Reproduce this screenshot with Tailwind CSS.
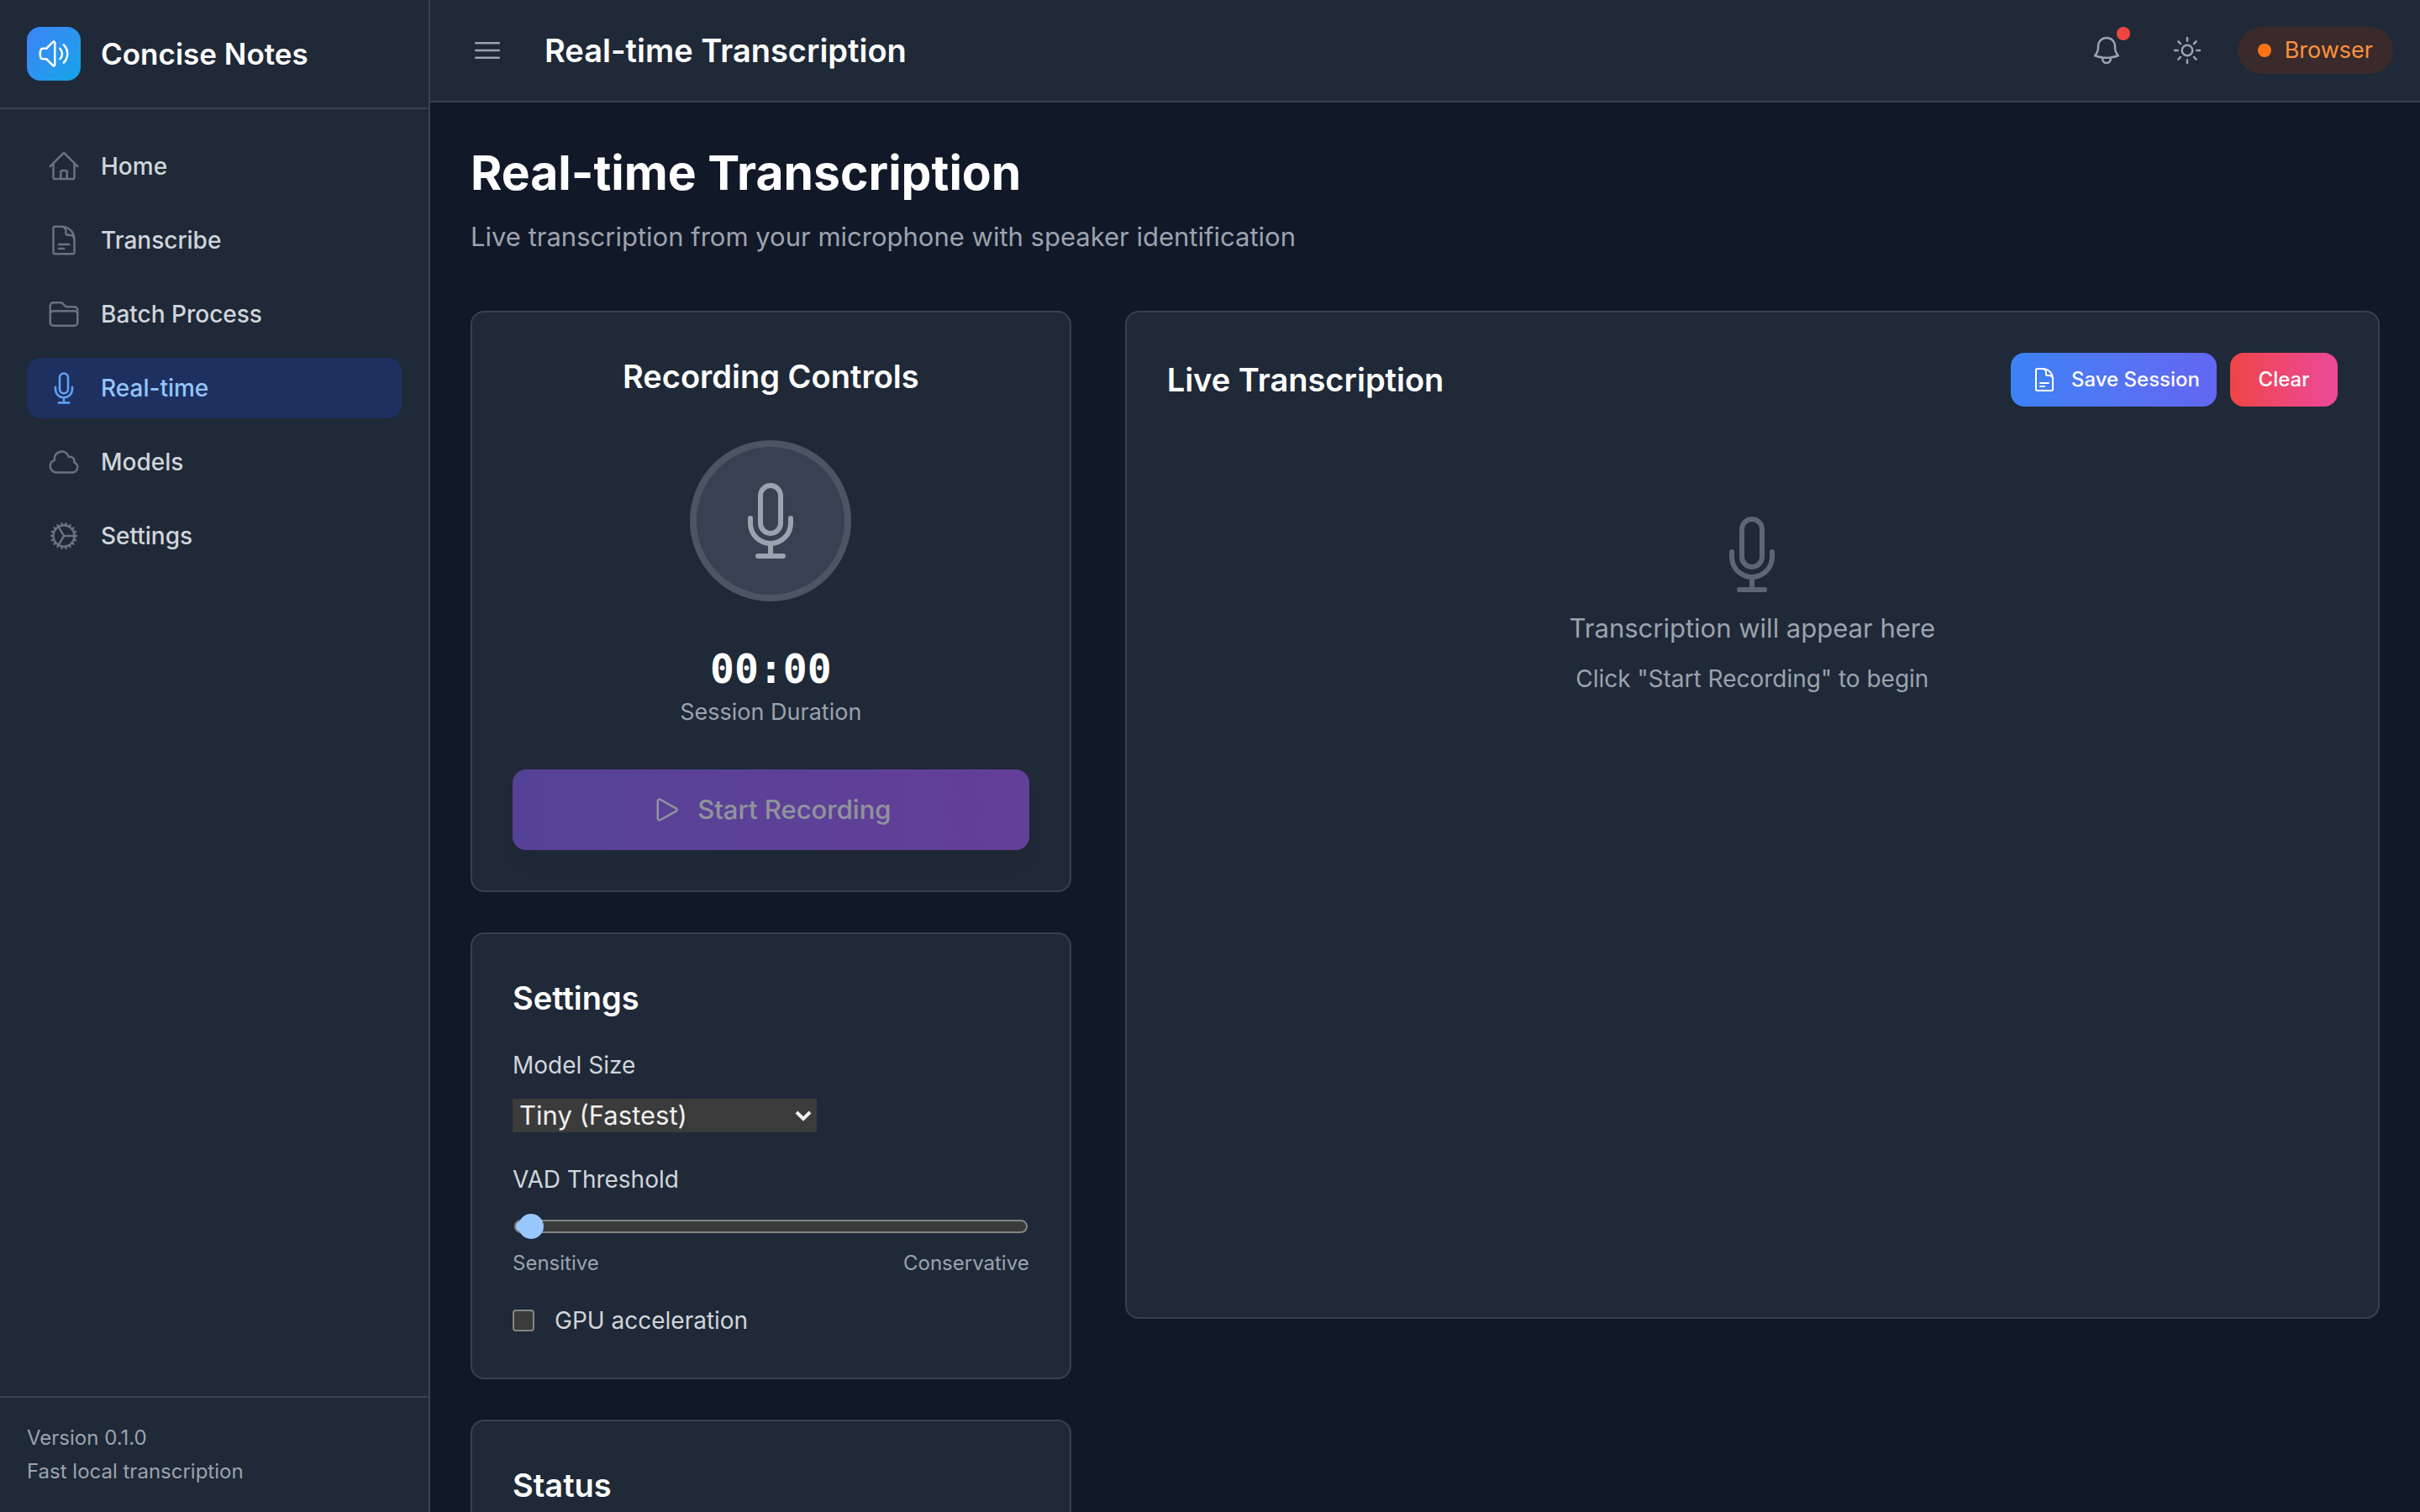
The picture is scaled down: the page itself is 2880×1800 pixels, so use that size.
<!DOCTYPE html>
<html lang="en">
<head>
<meta charset="utf-8">
<meta name="viewport" content="width=device-width, initial-scale=1">
<title>Concise Notes – Real-time Transcription</title>
<script src="https://cdn.jsdelivr.net/npm/@tailwindcss/browser@4"></script>
</head>
<body class="flex h-screen overflow-hidden bg-[#111827] font-[Inter,sans-serif] text-[28px] leading-10 text-[#d1d5db] antialiased">

<!-- Shared icon symbols -->
<svg class="hidden" aria-hidden="true">
  <symbol id="mic" viewBox="0 0 24 24"><path d="M12 18.75a6 6 0 0 0 6-6v-1.5m-6 7.5a6 6 0 0 1-6-6v-1.5m6 7.5v3.75m-3.75 0h7.5M12 15.75a3 3 0 0 1-3-3V4.5a3 3 0 1 1 6 0v8.25a3 3 0 0 1-3 3Z"/></symbol>
  <symbol id="doc" viewBox="0 0 24 24"><path d="M19.5 14.25v-2.625a3.375 3.375 0 0 0-3.375-3.375h-1.5A1.125 1.125 0 0 1 13.5 7.125v-1.5a3.375 3.375 0 0 0-3.375-3.375H8.25m0 12.75h7.5m-7.5 3H12M10.5 2.25H5.625c-.621 0-1.125.504-1.125 1.125v17.25c0 .621.504 1.125 1.125 1.125h12.75c.621 0 1.125-.504 1.125-1.125V11.25a9 9 0 0 0-9-9Z"/></symbol>
</svg>

<aside class="flex w-[512px] shrink-0 flex-col border-r-2 border-[#374151] bg-[#1f2937]">
  <div class="flex items-center gap-6 border-b-2 border-[#374151] p-8">
    <div class="flex size-16 items-center justify-center rounded-2xl bg-linear-135 from-[#3b82f6] to-[#0ea5e9] text-white">
      <svg class="size-10 fill-none stroke-current stroke-[1.5] [stroke-linecap:round] [stroke-linejoin:round]" viewBox="0 0 24 24"><path d="M19.114 5.636a9 9 0 0 1 0 12.728M16.463 8.288a5.25 5.25 0 0 1 0 7.424M6.75 8.25l4.72-4.72a.75.75 0 0 1 1.28.53v15.88a.75.75 0 0 1-1.28.53l-4.72-4.72H4.51c-.88 0-1.704-.507-1.938-1.354A9.009 9.009 0 0 1 2.25 12c0-.83.112-1.633.322-2.396C2.806 8.756 3.63 8.25 4.51 8.25H6.75Z"/></svg>
    </div>
    <span class="text-[35px] font-semibold text-white">Concise Notes</span>
  </div>
  <nav class="flex grow flex-col gap-4 p-8 font-medium">
    <a href="#" class="flex items-center gap-6 rounded-2xl px-6 py-4">
      <svg class="size-10 fill-none stroke-[#6b7280] stroke-[1.5] [stroke-linecap:round] [stroke-linejoin:round]" viewBox="0 0 24 24"><path d="m2.25 12 8.954-8.955c.44-.439 1.152-.439 1.591 0L21.75 12M4.5 9.75v10.125c0 .621.504 1.125 1.125 1.125H9.75v-4.875c0-.621.504-1.125 1.125-1.125h2.25c.621 0 1.125.504 1.125 1.125V21h4.125c.621 0 1.125-.504 1.125-1.125V9.75M8.25 21h8.25"/></svg>
      Home
    </a>
    <a href="#" class="flex items-center gap-6 rounded-2xl px-6 py-4">
      <svg class="size-10 fill-none stroke-[#6b7280] stroke-[1.5] [stroke-linecap:round] [stroke-linejoin:round]"><use href="#doc"/></svg>
      Transcribe
    </a>
    <a href="#" class="flex items-center gap-6 rounded-2xl px-6 py-4">
      <svg class="size-10 fill-none stroke-[#6b7280] stroke-[1.5] [stroke-linecap:round] [stroke-linejoin:round]" viewBox="0 0 24 24"><path d="M2.25 12.75V12A2.25 2.25 0 0 1 4.5 9.75h15A2.25 2.25 0 0 1 21.75 12v.75m-8.69-6.44-2.12-2.12a1.5 1.5 0 0 0-1.061-.44H4.5A2.25 2.25 0 0 0 2.25 6v12a2.25 2.25 0 0 0 2.25 2.25h15A2.25 2.25 0 0 0 21.75 18V9a2.25 2.25 0 0 0-2.25-2.25h-5.379a1.5 1.5 0 0 1-1.06-.44Z"/></svg>
      Batch Process
    </a>
    <a href="#" aria-current="page" class="flex items-center gap-6 rounded-2xl bg-[#1e305f] px-6 py-4 text-[#93c5fd]">
      <svg class="size-10 fill-none stroke-[#60a5fa] stroke-[1.5] [stroke-linecap:round] [stroke-linejoin:round]"><use href="#mic"/></svg>
      Real-time
    </a>
    <a href="#" class="flex items-center gap-6 rounded-2xl px-6 py-4">
      <svg class="size-10 fill-none stroke-[#6b7280] stroke-[1.5] [stroke-linecap:round] [stroke-linejoin:round]" viewBox="0 0 24 24"><path d="M2.25 15a4.5 4.5 0 0 0 4.5 4.5H18a3.75 3.75 0 0 0 1.332-7.257 3 3 0 0 0-3.758-3.848 5.25 5.25 0 0 0-10.233 2.33A4.502 4.502 0 0 0 2.25 15Z"/></svg>
      Models
    </a>
    <a href="#" class="flex items-center gap-6 rounded-2xl px-6 py-4">
      <svg class="size-10 fill-none stroke-[#6b7280] stroke-[1.5] [stroke-linecap:round] [stroke-linejoin:round]" viewBox="0 0 24 24"><path d="M4.5 12a7.5 7.5 0 0 0 15 0m-15 0a7.5 7.5 0 1 1 15 0m-15 0H3m16.5 0H21m-1.5 0H12m-8.457 3.077 1.41-.513m14.095-5.13 1.41-.513M5.106 17.785l1.15-.964m11.49-9.642 1.149-.964M7.501 19.795l.75-1.3m7.5-12.99.75-1.3m-6.063 16.658.26-1.477m2.605-14.772.26-1.477m0 17.726-.26-1.477M10.698 4.614l-.26-1.477M16.5 19.794l-.75-1.299M7.5 4.205 12 12m6.894 5.785-1.149-.964M6.256 7.178l-1.15-.964m15.352 8.864-1.41-.513M4.954 9.435l-1.41-.514M12.002 12l-3.75 6.495"/></svg>
      Settings
    </a>
  </nav>
  <div class="flex flex-col gap-2 border-t-2 border-[#374151] p-8 text-[24px] leading-8 text-[#9ca3af]">
    <p>Version 0.1.0</p>
    <p>Fast local transcription</p>
  </div>
</aside>

<div class="flex min-w-0 grow flex-col">
  <header class="flex shrink-0 items-center justify-between border-b-2 border-[#374151] bg-[#1f2937] px-8 py-6">
    <div class="flex items-center gap-8">
      <button type="button" aria-label="Toggle menu" class="p-4 text-[#9ca3af]">
        <svg class="size-10 fill-none stroke-current stroke-[1.5] [stroke-linecap:round]" viewBox="0 0 24 24"><path d="M3.75 6.75h16.5M3.75 12h16.5m-16.5 5.25h16.5"/></svg>
      </button>
      <h2 class="text-[38px] leading-14 font-semibold text-white">Real-time Transcription</h2>
    </div>
    <div class="flex items-center gap-6">
      <button type="button" aria-label="Notifications" class="relative p-4 text-[#9ca3af]">
        <svg class="size-10 fill-none stroke-current stroke-[1.5] [stroke-linecap:round] [stroke-linejoin:round]" viewBox="0 0 24 24"><path d="M14.857 17.082a23.848 23.848 0 0 0 5.454-1.31A8.967 8.967 0 0 1 18 9.75V9A6 6 0 0 0 6 9v.75a8.967 8.967 0 0 1-2.312 6.022c1.733.64 3.56 1.085 5.455 1.31m5.714 0a24.255 24.255 0 0 1-5.714 0m5.714 0a3 3 0 1 1-5.714 0"/></svg>
        <span class="absolute top-2 right-2 size-4 rounded-full bg-[#ef4444]"></span>
      </button>
      <button type="button" aria-label="Switch theme" class="p-4 text-[#9ca3af]">
        <svg class="size-10 fill-none stroke-current stroke-[1.5] [stroke-linecap:round] [stroke-linejoin:round]" viewBox="0 0 24 24"><path d="M12 3v2.25m6.364.386-1.591 1.591M21 12h-2.25m-.386 6.364-1.591-1.591M12 18.75V21m-4.773-4.227-1.591 1.591M5.25 12H3m4.227-4.773L5.636 5.636M15.75 12a3.75 3.75 0 1 1-7.5 0 3.75 3.75 0 0 1 7.5 0Z"/></svg>
      </button>
      <div class="flex items-center gap-4 rounded-full bg-[#3b2a2b] px-6 py-2 text-[27px] text-[#fb923c]">
        <span class="size-4 rounded-full bg-[#f97316]"></span>
        Browser
      </div>
    </div>
  </header>

  <main class="min-h-0 grow overflow-hidden p-12">
    <h1 class="text-[57px] leading-18 font-bold text-white">Real-time Transcription</h1>
    <p class="mt-4 text-[31px] leading-12 text-[#9ca3af]">Live transcription from your microphone with speaker identification</p>

    <div class="mt-16 grid grid-cols-3 items-start gap-16">
      <div class="flex flex-col gap-12">
        <section class="flex flex-col items-center rounded-2xl border-2 border-[#374151] bg-[#1f2937] p-12">
          <h3 class="text-[38px] leading-14 font-semibold text-white">Recording Controls</h3>
          <div class="mt-12 flex size-48 items-center justify-center rounded-full border-8 border-[#4b5563] bg-[#374151]">
            <svg class="size-24 fill-none stroke-[#9ca3af] stroke-[1.5] [stroke-linecap:round] [stroke-linejoin:round]"><use href="#mic"/></svg>
          </div>
          <p class="mt-12 font-['DejaVu_Sans_Mono',monospace] text-[48px] leading-16 font-bold text-white">00:00</p>
          <p class="text-[27px] text-[#9ca3af]">Session Duration</p>
          <button type="button" disabled class="mt-12 flex h-24 w-full items-center justify-center gap-4 rounded-2xl bg-linear-to-r from-[#8b5cf6] to-[#a855f7] text-[31px] font-medium text-white opacity-50 shadow-[0_20px_30px_-6px_rgb(0_0_0/0.05)]">
            <svg class="size-10 fill-none stroke-current stroke-[1.5] [stroke-linecap:round] [stroke-linejoin:round]" viewBox="0 0 24 24"><path d="M5.25 5.653c0-.856.917-1.398 1.667-.986l11.54 6.347a1.125 1.125 0 0 1 0 1.972l-11.54 6.347a1.125 1.125 0 0 1-1.667-.986V5.653Z"/></svg>
            Start Recording
          </button>
        </section>

        <section class="flex flex-col rounded-2xl border-2 border-[#374151] bg-[#1f2937] p-12">
          <h3 class="text-[38px] leading-14 font-semibold text-white">Settings</h3>
          <label for="model" class="mt-8">Model Size</label>
          <div class="relative mt-5 w-[362px]">
            <select id="model" class="block h-10 w-full appearance-none bg-[#3b3b3b] px-2 text-[31px] leading-10 text-[#f0f0f0]">
              <option>Tiny (Fastest)</option>
            </select>
            <svg class="pointer-events-none absolute top-3 right-1 h-4 w-6 fill-none stroke-[#f0f0f0] stroke-4" viewBox="0 0 24 16"><path d="m4 4 8 8 8-8"/></svg>
          </div>
          <label for="vad" class="mt-9">VAD Threshold</label>
          <input id="vad" type="range" min="0" max="200" value="1" class="mx-0.5 mt-7 h-4 appearance-none rounded-full border-2 border-[#858585] bg-linear-to-r from-[#99c8ff] from-[20px] to-[#3b3b3b] to-[20px] [&::-webkit-slider-thumb]:size-[30px] [&::-webkit-slider-thumb]:appearance-none [&::-webkit-slider-thumb]:rounded-full [&::-webkit-slider-thumb]:bg-[#99c8ff]">
          <div class="mt-5 flex justify-between text-[24px] leading-8 text-[#9ca3af]">
            <span>Sensitive</span>
            <span>Conservative</span>
          </div>
          <label for="gpu" class="mt-8 flex items-center gap-6">
            <input id="gpu" type="checkbox" class="size-[26px] appearance-none rounded-sm border-2 border-[#858585] bg-[#3b3b3b]">
            GPU acceleration
          </label>
        </section>

        <section class="rounded-2xl border-2 border-[#374151] bg-[#1f2937] p-12">
          <h3 class="text-[38px] leading-14 font-semibold text-white">Status</h3>
        </section>
      </div>

      <section class="col-span-2 flex min-h-[1200px] flex-col rounded-2xl border-2 border-[#374151] bg-[#1f2937] p-12">
        <div class="flex items-center justify-between">
          <h3 class="text-[38px] leading-14 font-semibold text-white">Live Transcription</h3>
          <div class="flex gap-4 text-[24px] leading-8 font-medium text-white">
            <button type="button" class="flex items-center gap-4 rounded-2xl bg-linear-to-r from-[#3b82f6] to-[#6366f1] py-4 pr-5 pl-6">
              <svg class="size-8 fill-none stroke-current stroke-[1.5] [stroke-linecap:round] [stroke-linejoin:round]"><use href="#doc"/></svg>
              Save Session
            </button>
            <button type="button" class="w-32 rounded-2xl bg-linear-to-r from-[#ef4444] to-[#ec4899] py-4">Clear</button>
          </div>
        </div>
        <div class="flex flex-col items-center pt-32 text-[#9ca3af]">
          <svg class="size-24 fill-none stroke-current stroke-[1.5] opacity-50 [stroke-linecap:round] [stroke-linejoin:round]"><use href="#mic"/></svg>
          <p class="mt-4 text-[31px] leading-12">Transcription will appear here</p>
          <p class="mt-4">Click "Start Recording" to begin</p>
        </div>
      </section>
    </div>
  </main>
</div>
</body>
</html>
